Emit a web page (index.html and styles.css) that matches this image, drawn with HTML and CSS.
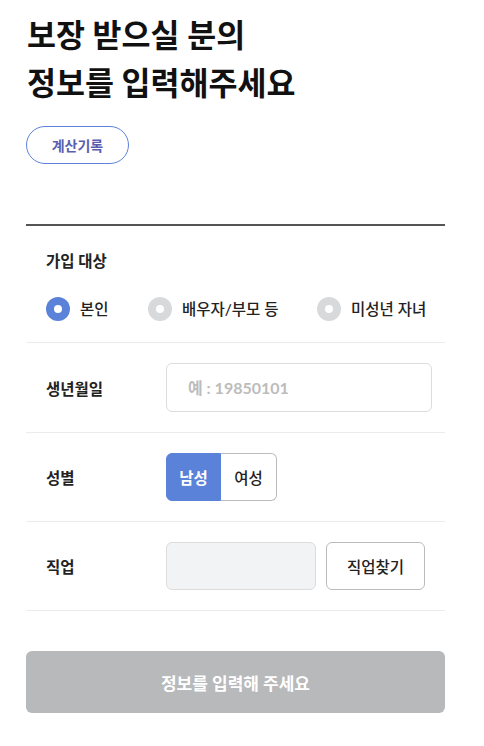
FILE: index.html
```html
<!DOCTYPE html>
<html lang="ko">
<head>
    <meta charset="UTF-8">
    <meta name="viewport" content="width=device-width, initial-scale=1.0">
    <title>보장 받으실 분의 정보를 입력해주세요</title>
    <link rel="stylesheet" href="styles.css">
</head>
<body>
    <div class="page">
        <h1 class="title">보장 받으실 분의<br>정보를 입력해주세요</h1>
        <button class="history-btn">계산기록</button>

        <div class="form">
            <div class="target-row">
                <div class="target-label">가입 대상</div>
                <div class="radios">
                    <label class="radio active"><span class="dot"></span>본인</label>
                    <label class="radio"><span class="dot"></span>배우자/부모 등</label>
                    <label class="radio"><span class="dot"></span>미성년 자녀</label>
                </div>
            </div>

            <div class="row">
                <div class="row-label">생년월일</div>
                <input class="text-input" type="text" placeholder="예 : 19850101">
            </div>

            <div class="row">
                <div class="row-label">성별</div>
                <div class="toggle">
                    <button class="toggle-btn on">남성</button>
                    <button class="toggle-btn">여성</button>
                </div>
            </div>

            <div class="row">
                <div class="row-label">직업</div>
                <div class="job-box"></div>
                <button class="job-btn">직업찾기</button>
            </div>
        </div>

        <button class="submit-btn" disabled>정보를 입력해 주세요</button>
    </div>
</body>
</html>
```

FILE: styles.css
```css
body {
    margin: 0;
    padding: 0;
    background: #fff;
    font-family: "Lato", "Noto Sans CJK KR", sans-serif;
    color: #222;
}
.page {
    width: 419px;
    margin-left: 26px;
    padding-top: 11px;
}
.title {
    margin: 0 0 0 1px;
    font-size: 31.5px;
    line-height: 48px;
    font-weight: 700;
    color: #111;
}
.history-btn {
    display: block;
    margin-top: 19px;
    width: 103px;
    height: 38px;
    border: 1px solid #5c82d8;
    border-radius: 19px;
    background: #fff;
    color: #5a5eb0;
    font-family: inherit;
    font-size: 14px;
    font-weight: 700;
    padding: 0;
}
.form {
    margin-top: 60px;
    border-top: 2px solid #555;
}
.target-row {
    padding: 23px 0 21px 20px;
    border-bottom: 1px solid #ececec;
}
.target-label {
    font-size: 15.5px;
    font-weight: 700;
    line-height: 24px;
    color: #222;
}
.radios {
    display: flex;
    margin-top: 24px;
}
.radio {
    display: flex;
    align-items: center;
    font-size: 15.5px;
    font-weight: 500;
    color: #222;
    line-height: 24px;
}
.radio:nth-child(1) { width: 102px; }
.radio:nth-child(2) { width: 169px; }
.dot {
    width: 24px;
    height: 24px;
    border-radius: 50%;
    background: #d8d9db;
    margin-right: 10px;
    display: flex;
    align-items: center;
    justify-content: center;
}
.dot::after {
    content: "";
    width: 8px;
    height: 8px;
    border-radius: 50%;
    background: #fff;
}
.radio.active .dot {
    background: #5a82d9;
}
.row {
    display: flex;
    align-items: center;
    padding: 20px 0;
    border-bottom: 1px solid #ececec;
}
.row-label {
    width: 120px;
    padding-left: 20px;
    font-size: 15.5px;
    font-weight: 700;
    color: #222;
}
.text-input {
    box-sizing: border-box;
    width: 266px;
    height: 49px;
    border: 1px solid #dcdcdc;
    border-radius: 6px;
    padding: 0 21px;
    font-family: inherit;
    font-size: 16px;
    font-weight: 700;
}
.text-input::placeholder {
    color: #bcbcbc;
}
.toggle {
    display: flex;
    height: 48px;
}
.toggle-btn {
    width: 56px;
    height: 48px;
    border: 1px solid #bbb;
    background: #fff;
    color: #222;
    font-family: inherit;
    font-size: 15.5px;
    font-weight: 500;
    padding: 0;
}
.toggle-btn:first-child {
    border-radius: 6px 0 0 6px;
    width: 55px;
}
.toggle-btn:last-child {
    border-left: none;
    border-radius: 0 6px 6px 0;
}
.toggle-btn.on {
    background: #5a82d9;
    border-color: #5a82d9;
    color: #fff;
    font-weight: 700;
}
.job-box {
    box-sizing: border-box;
    width: 150px;
    height: 48px;
    background: #f2f3f5;
    border: 1px solid #dcdcdc;
    border-radius: 6px;
}
.job-btn {
    box-sizing: border-box;
    width: 99px;
    height: 48px;
    margin-left: 10px;
    border: 1px solid #bbb;
    border-radius: 6px;
    background: #fff;
    color: #222;
    font-family: inherit;
    font-size: 15.5px;
    font-weight: 500;
    padding: 0;
}
.submit-btn {
    display: block;
    width: 100%;
    height: 62px;
    margin-top: 40px;
    border: none;
    border-radius: 6px;
    background: #b8b9bb;
    color: #fff;
    font-family: inherit;
    font-size: 17px;
    font-weight: 700;
}
```
